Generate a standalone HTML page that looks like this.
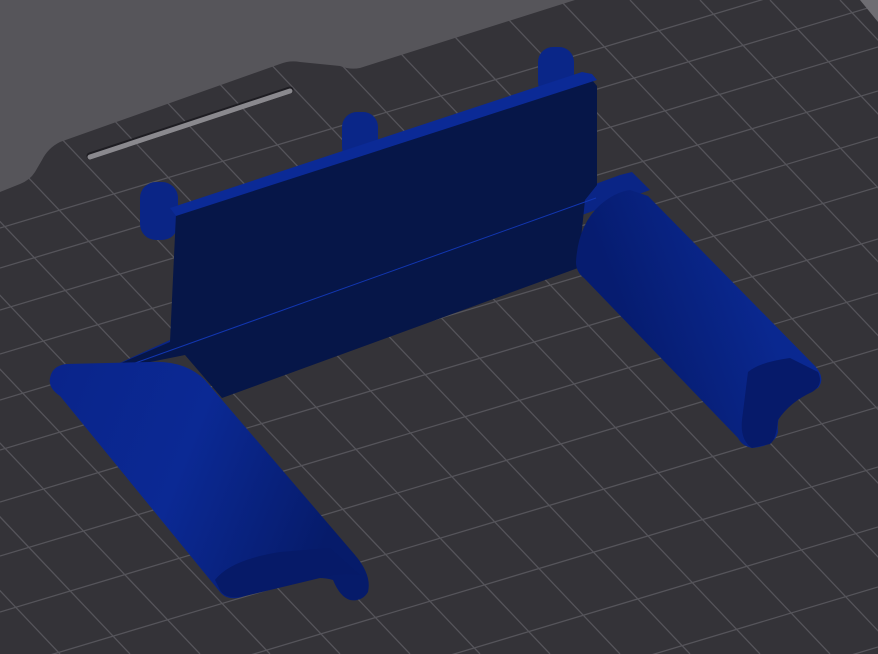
<!DOCTYPE html>
<html><head><style>html,body{margin:0;padding:0;background:#343338;overflow:hidden;width:878px;height:654px}svg{display:block}</style></head>
<body>
<svg width="878" height="654" viewBox="0 0 878 654" xmlns="http://www.w3.org/2000/svg">
<defs>
<linearGradient id="rl" x1="0" y1="0" x2="1" y2="0.3">
<stop offset="0" stop-color="#0a248a"/><stop offset="0.5" stop-color="#0b2994"/><stop offset="1" stop-color="#061b6a"/></linearGradient>
<linearGradient id="rr" x1="0" y1="0" x2="1" y2="-0.4">
<stop offset="0" stop-color="#061c70"/><stop offset="0.5" stop-color="#0a2890"/><stop offset="1" stop-color="#0b2a96"/></linearGradient>
</defs>
<rect width="878" height="654" fill="#343338"/>
<g stroke="#55545a" stroke-width="1.3">
<line x1="0" y1="228" x2="878" y2="-35"/>
<line x1="0" y1="268" x2="878" y2="5"/>
<line x1="0" y1="310" x2="878" y2="47"/>
<line x1="0" y1="354" x2="878" y2="91"/>
<line x1="0" y1="400" x2="878" y2="137"/>
<line x1="0" y1="450" x2="878" y2="187"/>
<line x1="0" y1="502" x2="878" y2="239"/>
<line x1="0" y1="556" x2="878" y2="293"/>
<line x1="0" y1="612" x2="878" y2="349"/>
<line x1="0" y1="670" x2="878" y2="407"/>
<line x1="0" y1="730" x2="878" y2="467"/>
<line x1="0" y1="790" x2="878" y2="527"/>
<line x1="0" y1="850" x2="878" y2="587"/>
<line x1="0" y1="910" x2="878" y2="647"/>
<line x1="0" y1="970" x2="878" y2="707"/>
<line x1="-560" y1="0" x2="60" y2="654"/>
<line x1="-490" y1="0" x2="130" y2="654"/>
<line x1="-420" y1="0" x2="200" y2="654"/>
<line x1="-350" y1="0" x2="270" y2="654"/>
<line x1="-280" y1="0" x2="340" y2="654"/>
<line x1="-210" y1="0" x2="410" y2="654"/>
<line x1="-140" y1="0" x2="480" y2="654"/>
<line x1="-70" y1="0" x2="550" y2="654"/>
<line x1="0" y1="0" x2="620" y2="654"/>
<line x1="70" y1="0" x2="690" y2="654"/>
<line x1="140" y1="0" x2="760" y2="654"/>
<line x1="210" y1="0" x2="830" y2="654"/>
<line x1="280" y1="0" x2="900" y2="654"/>
<line x1="350" y1="0" x2="970" y2="654"/>
<line x1="420" y1="0" x2="1040" y2="654"/>
<line x1="490" y1="0" x2="1110" y2="654"/>
<line x1="560" y1="0" x2="1180" y2="654"/>
<line x1="630" y1="0" x2="1250" y2="654"/>
<line x1="700" y1="0" x2="1320" y2="654"/>
<line x1="770" y1="0" x2="1390" y2="654"/>
<line x1="840" y1="0" x2="1460" y2="654"/>
</g>
<path d="M0 0 H575 L360 68 Q350 70 340 66 L300 62 Q290 60 280 64 L60 142 Q48 148 42 160 L35 172 Q30 180 20 184 L0 192 Z" fill="#56555a"/>
<path d="M860 0 L878 0 L878 22 Z" fill="#6e6d72"/>
<line x1="90" y1="156" x2="290" y2="90" stroke="#1e1d22" stroke-width="7" stroke-linecap="round"/>
<line x1="90" y1="157" x2="290" y2="91" stroke="#8a898e" stroke-width="5" stroke-linecap="round"/>
<!-- pegs -->
<rect x="140" y="182" width="38" height="58" rx="16" fill="#0a2586"/>
<rect x="342" y="112" width="36" height="50" rx="15" fill="#0a2688"/>
<rect x="538" y="47" width="36" height="50" rx="15" fill="#0a2688"/>
<!-- base top strip -->
<polygon points="100,372 170,340 620,175 632,172 650,190 230,345" fill="#0a2586"/>
<!-- wall + base front dark -->
<polygon points="176,214 592,80 597,86 597,185 585,200 578,268 222,398 185,355 100,372 170,342" fill="#061648"/>
<!-- wall top face -->
<polygon points="176,216 170,208 582,72 592,74 597,80" fill="#0b2a96"/>
<line x1="110" y1="372" x2="596" y2="198" stroke="#1236b0" stroke-width="1"/>
<!-- left roller -->
<path d="M50 378 Q52 366 66 364 L150 362 Q185 360 205 380 L355 555 Q372 575 368 592 Q362 602 350 600 Q340 597 333 580 Q320 576 300 580 L245 596 Q228 602 220 592 L60 396 Q48 388 50 378 Z" fill="url(#rl)"/>
<path d="M215 580 Q230 560 280 552 L330 548 L360 575 Q340 572 320 578 L245 596 Q226 600 220 590 Z" fill="#061a68"/>
<!-- right roller -->
<path d="M576 262 Q578 225 600 205 Q615 192 630 190 L648 196 L815 366 Q826 378 818 388 Q800 396 790 400 Q776 412 778 432 Q775 446 752 448 Q742 446 738 438 L584 278 Q576 272 576 262 Z" fill="url(#rr)"/>
<path d="M748 372 Q760 362 790 358 L818 372 Q824 385 812 392 Q790 402 778 420 Q776 440 770 444 L752 448 Q740 440 742 420 Z" fill="#061a6a"/>
</svg>
</body></html>
